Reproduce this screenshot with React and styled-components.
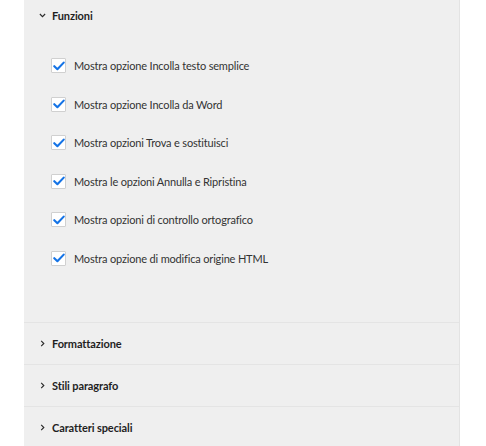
import React from "react";
import styled, { createGlobalStyle } from "styled-components";

const Global = createGlobalStyle`
  html, body { margin: 0; padding: 0; background: #ffffff; }
  body { font-family: Lato, "Open Sans", sans-serif; color: #2c2c2c; }
  #root { height: 446px; overflow: hidden; }
`;

const Page = styled.div`
  height: 446px;
  padding-left: 24px;
  display: flex;
`;

const Panel = styled.div`
  width: 435px;
  background: #efefef;
  border-right: 1px solid #e3e3e3;
  display: flex;
  flex-direction: column;
`;

const Section = styled.section`
  border-bottom: 1px solid ${(p) => (p.$last ? "transparent" : "#e4e4e4")};
`;

const Header = styled.div`
  display: flex;
  align-items: center;
  height: ${(p) => (p.$open ? "31px" : "41px")};
  padding-left: 15px;
  gap: 6px;
  font-size: 11px;
  font-weight: 700;
  letter-spacing: -0.1px;
  color: #1f1f1f;
`;

const Chevron = styled.svg`
  width: 7px;
  height: 7px;
  flex: none;
`;

const List = styled.div`
  display: flex;
  flex-direction: column;
  gap: 23.6px;
  padding: 27px 0 56px 27px;
`;

const Row = styled.label`
  display: flex;
  align-items: center;
  gap: 8px;
  height: 15px;
  font-size: 11px;
  letter-spacing: -0.17px;
  color: #333333;
`;

const Box = styled.span`
  width: 13px;
  height: 13px;
  border: 1px solid #d0d0d0;
  background: #ffffff;
  border-radius: 1px;
  display: flex;
  align-items: center;
  justify-content: center;
  flex: none;
`;

const Check = () => (
  <svg width="12" height="10" viewBox="0 0 12 10">
    <path d="M1.3 5.2 L4.4 8.2 L10.7 1.6" fill="none" stroke="#1473e6" strokeWidth="2.1" strokeLinecap="round" strokeLinejoin="round" />
  </svg>
);

const Down = () => (
  <Chevron viewBox="0 0 8 8">
    <path d="M1 2.3 L4 5.3 L7 2.3" fill="none" stroke="#2a2a2a" strokeWidth="1.3" />
  </Chevron>
);

const Right = () => (
  <Chevron viewBox="0 0 8 8">
    <path d="M2.5 1 L5.5 4 L2.5 7" fill="none" stroke="#2a2a2a" strokeWidth="1.3" />
  </Chevron>
);

const options = [
  "Mostra opzione Incolla testo semplice",
  "Mostra opzione Incolla da Word",
  "Mostra opzioni Trova e sostituisci",
  "Mostra le opzioni Annulla e Ripristina",
  "Mostra opzioni di controllo ortografico",
  "Mostra opzione di modifica origine HTML",
];

export default function App() {
  return (
    <>
      <Global />
      <Page>
        <Panel>
          <Section>
            <Header $open>
              <Down />
              Funzioni
            </Header>
            <List>
              {options.map((o) => (
                <Row key={o}>
                  <Box><Check /></Box>
                  {o}
                </Row>
              ))}
            </List>
          </Section>
          <Section>
            <Header><Right />Formattazione</Header>
          </Section>
          <Section>
            <Header><Right />Stili paragrafo</Header>
          </Section>
          <Section $last>
            <Header><Right />Caratteri speciali</Header>
          </Section>
        </Panel>
      </Page>
    </>
  );
}
